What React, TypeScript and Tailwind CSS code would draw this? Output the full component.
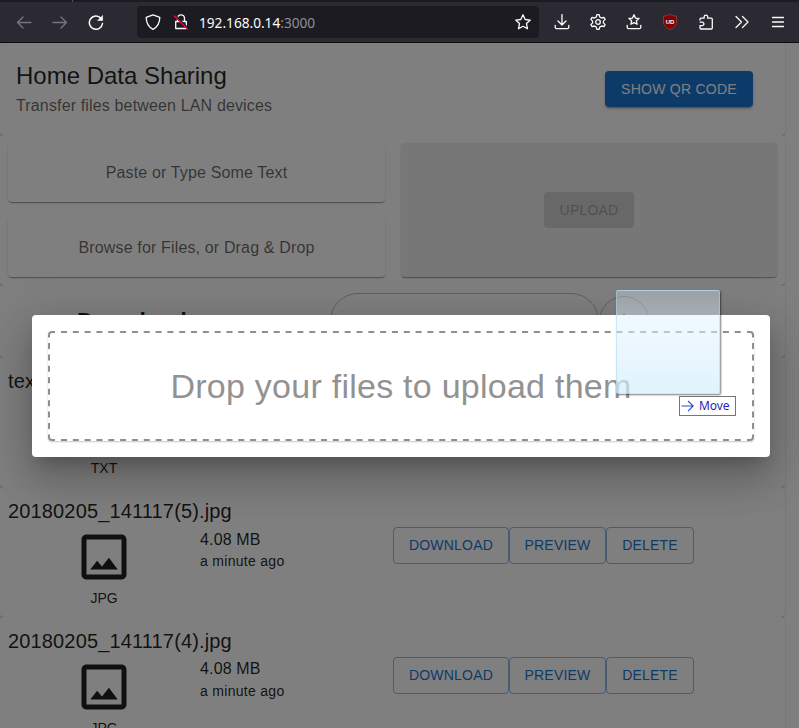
import React from "react";

const elevation1 =
  "shadow-[0_2px_1px_-1px_rgba(0,0,0,0.2),0_1px_1px_0_rgba(0,0,0,0.14),0_1px_3px_0_rgba(0,0,0,0.12)]";

function Glyph({ children, className = "" }: { children: React.ReactNode; className?: string }) {
  return (
    <svg
      viewBox="0 0 16 16"
      className={`size-4 shrink-0 ${className}`}
      fill="none"
      stroke="currentColor"
      strokeWidth="1.3"
      strokeLinecap="round"
      strokeLinejoin="round"
    >
      {children}
    </svg>
  );
}

function BrowserBar() {
  return (
    <header className="h-[43px] border-b border-[#0c0c0d] bg-[#2b2a33] text-[#fbfbfe]">
      <div className="flex h-0.5 bg-[#1c1b22]">
        <div className="ml-[72px] h-full w-px bg-[#53525b]" />
      </div>
      <div className="flex h-10 items-center">
        <div className="flex w-[137px] items-center gap-5 pl-4">
          <Glyph className="text-[#77767d]">
            <path d="M15 8.500H1.500M7 3 1.500 8.500 7 14" />
          </Glyph>
          <Glyph className="text-[#77767d]">
            <path d="M1 8.500h13.500M9 3l5.500 5.500L9 14" />
          </Glyph>
          <Glyph>
            <path strokeWidth="1.5" d="M13 4.400A6.600 6.600 0 1 0 14.500 9.500" />
            <path fill="currentColor" strokeWidth="0.6" d="M14.600 1.800v4.700H9.900z" />
          </Glyph>
        </div>
        <div className="flex h-8 w-[402px] items-center rounded bg-[#1c1b22] pr-2 pl-2">
          <Glyph>
            <path d="M8 .9 1.200 3.300c0 5.100 1.300 9.300 6.800 12 5.500-2.700 6.800-6.900 6.800-12z" />
          </Glyph>
          <Glyph className="ml-3">
            <path d="M4.500 7V4.300a3.500 3.500 0 0 1 7 0V7M2.700 7.500h10.600v7H2.700z" />
            <path stroke="#1c1b22" strokeWidth="2.200" d="M2.500 2l12.500 12.500" />
            <path stroke="#ff0039" strokeWidth="1.300" d="M1.500 2l13 13" />
          </Glyph>
          <span className="ml-2.5 pt-px font-['Noto_Sans',sans-serif] text-[13.700px] leading-5 tracking-[-0.02px] whitespace-nowrap">
            192.168.0.14<span className="text-[#8f8f96]">:3000</span>
          </span>
          <Glyph className="ml-auto">
            <path d="M8 .8l2.200 4.700 5.100.6-3.800 3.500 1 5.200L8 12.300l-4.500 2.500 1-5.200L.7 6.100l5.100-.6z" />
          </Glyph>
        </div>
        <div className="flex items-center gap-5 pl-[15px]">
          <Glyph>
            <path d="M8 .6v10M4 7l4 4 4-4M1.200 11.500v1.700q0 1.500 1.500 1.500h10.600q1.500 0 1.500-1.500v-1.700" />
          </Glyph>
          <Glyph>
            <circle cx="8" cy="8" r="2.300" />
            <path d="M6.200 3 6.900.6h2.200L9.800 3l1.700 1 2.400-.6 1.200 2-1.700 1.700v1.800l1.700 1.700-1.200 2-2.400-.6-1.700 1-.7 2.400H6.900L6.200 13l-1.700-1-2.400.6-1.200-2 1.700-1.700V7.100L.9 5.400l1.200-2 2.400.6z" />
          </Glyph>
          <Glyph>
            <path d="M8 .8l1.500 3.300 3.500.4-2.600 2.300.7 3.500L8 8.600l-3.100 1.700.7-3.500L3 4.500l3.500-.4zM1.200 11.300v1.900q0 1.500 1.500 1.500h10.600q1.500 0 1.500-1.500v-1.900" />
          </Glyph>
          <span className="relative flex size-4 items-center justify-center">
            <svg viewBox="0 0 16 16" className="absolute inset-0 size-4">
              <path fill="#800000" stroke="#96585d" strokeWidth=".6" d="M8 .3q3 1.900 6.500 1.900v6c0 3.500-3 5.800-6.500 7.500C4.500 14 1.500 11.700 1.500 8.200v-6Q5 2.200 8 .3z" />
            </svg>
            <span className="relative font-['Liberation_Sans',sans-serif] text-[6px] leading-none font-bold">UD</span>
          </span>
          <Glyph>
            <path d="M2 6V5.200q0-1 1-1h3.100V2.900a1.800 1.800 0 0 1 3.600 0v1.300h3.600q1 0 1 1v8.800q0 1-1 1H3q-1 0-1-1v-2.400h2.200a1.500 1.500 0 0 0 0-3.400H2.200" />
          </Glyph>
          <Glyph>
            <path d="M2 2.500 7.500 8 2 13.500M8.500 2.500 14 8l-5.500 5.500" />
          </Glyph>
          <Glyph>
            <path d="M2.500 3.500h11M2.500 8h11M2.500 12.500h11" />
          </Glyph>
        </div>
      </div>
    </header>
  );
}

function Section({ className, children }: { className: string; children: React.ReactNode }) {
  return <section className={`rounded bg-white ${elevation1} ${className}`}>{children}</section>;
}

function OutlinedButton({ children, className }: { children: string; className: string }) {
  return (
    <button
      className={`h-[37px] rounded border border-[#1976d2]/50 pb-0.5 text-sm tracking-[0.2px] text-[#1976d2] ${className}`}
    >
      {children}
    </button>
  );
}

function FileRow({ name, kind, size, sizeLine = "h-6 leading-6" }: { name: string; kind: string; size: string; sizeLine?: string }) {
  return (
    <Section className="h-[130px] shrink-0 p-2">
      <h2 className="text-xl leading-8 tracking-[0.15px]">{name}</h2>
      <div className="grid grid-cols-[192px_193px_1fr]">
        <div className="flex flex-col items-center">
          <svg viewBox="0 0 24 24" className="size-[60px]" fill="currentColor">
            <path d="M19 5v14H5V5h14m0-2H5c-1.100 0-2 .9-2 2v14c0 1.100.9 2 2 2h14c1.100 0 2-.9 2-2V5c0-1.100-.9-2-2-2zm-5.040 9.290-2.750 3.540-1.960-2.360L6.500 17h11l-3.540-4.710z" />
          </svg>
          <span className="text-sm leading-[22px]">{kind}</span>
        </div>
        <div>
          <p className={`text-base tracking-[0.15px] ${sizeLine}`}>{size}</p>
          <p className="text-sm leading-5 tracking-[0.3px]">a minute ago</p>
        </div>
        <div className="flex items-start">
          <OutlinedButton className="w-[116px]">DOWNLOAD</OutlinedButton>
          <OutlinedButton className="w-[97px]">PREVIEW</OutlinedButton>
          <OutlinedButton className="w-[88px]">DELETE</OutlinedButton>
        </div>
      </div>
    </Section>
  );
}

function DropDialog() {
  return (
    <div className="absolute inset-0 bg-black/50">
      <div className="mt-[272px] ml-8 h-[142px] w-[738px] rounded bg-white p-4 shadow-[0_11px_15px_-7px_rgba(0,0,0,0.2),0_24px_38px_3px_rgba(0,0,0,0.14),0_9px_46px_8px_rgba(0,0,0,0.12)]">
        <div className="relative flex h-full items-center justify-center rounded text-[34px] tracking-[0.25px] text-[#929292] shadow-[0_1px_2px_0_rgba(0,0,0,0.22)]">
          <svg viewBox="0 0 706 110" className="absolute inset-0 h-[110px] w-[706px]" fill="none" stroke="#8f8f8f" strokeWidth="2">
            <path strokeDasharray="6 5.820" d="M13 1h680M13 109h680" />
            <path strokeDasharray="6 5.430" d="M1 12v86M705 12v86" />
            <path d="M1 6.500V4a3 3 0 0 1 3-3h3M699 1h3a3 3 0 0 1 3 3v2.500M705 103.500v2.500a3 3 0 0 1-3 3h-3M7 109H4a3 3 0 0 1-3-3v-2.500" />
          </svg>
          Drop your files to upload them
        </div>
      </div>
    </div>
  );
}

function DragGhost() {
  return (
    <>
      <div className="absolute top-[290px] left-[616px] size-[104px] rounded-xs border border-[#a9d5ee]/50 bg-linear-to-b from-[#d8ecf6]/33 via-[#e0f3fe]/60 to-[#d3edfc]/70 shadow-[1px_1px_2px_rgba(0,0,0,0.5)]" />
      <div className="absolute top-[396px] left-[679px] flex h-5 w-[57px] items-center border border-[#767676] bg-white pl-px text-[#1f1fc0]">
        <svg viewBox="0 0 13 12" className="h-3 w-[13px]" fill="none" stroke="#2348c8" strokeWidth="1.1">
          <path d="M.5 6h12M7 .8 12.200 6 7 11.200" />
        </svg>
        <span className="ml-[5px] font-['Noto_Sans',sans-serif] text-xs leading-4 tracking-[-0.1px]">Move</span>
      </div>
    </>
  );
}

export default function App() {
  return (
    <div className="relative flex h-[728px] w-[799px] flex-col overflow-hidden font-['Liberation_Sans',Arial,sans-serif] text-black/87">
      <BrowserBar />
      <main className="relative flex-1 overflow-hidden bg-white">
        <div className="flex w-[785px] flex-col">
          <Section className="flex h-[92px] items-center justify-between pr-8 pl-4">
            <div className="pt-0.5">
              <h1 className="text-2xl leading-8">Home Data Sharing</h1>
              <p className="text-base leading-7 tracking-[0.15px] text-black/60">Transfer files between LAN devices</p>
            </div>
            <button className="h-9 w-[148px] rounded bg-[#1976d2] text-sm tracking-[0.25px] text-white shadow-[0_3px_1px_-2px_rgba(0,0,0,0.2),0_2px_2px_0_rgba(0,0,0,0.14),0_1px_5px_0_rgba(0,0,0,0.12)]">
              SHOW QR CODE
            </button>
          </Section>
          <Section className="grid h-[150px] grid-cols-[377px_376px] gap-4 p-2">
            <div className="grid grid-rows-2 gap-4 text-base tracking-[0.15px] text-black/60">
              <div className={`flex items-center justify-center rounded ${elevation1}`}>Paste or Type Some Text</div>
              <div className={`flex items-center justify-center rounded ${elevation1}`}>
                Browse for Files, or Drag &amp; Drop
              </div>
            </div>
            <div className={`flex items-center justify-center rounded bg-[#eeeeee] ${elevation1}`}>
              <button className="h-9 w-[90px] rounded bg-black/12 text-sm tracking-[0.2px] text-black/26">UPLOAD</button>
            </div>
          </Section>
          <Section className="flex h-[72px] items-center">
            <h2 className="w-[330px] pt-0.5 pl-[77px] text-[23px] leading-8 font-bold">Downloads</h2>
            <div className="h-14 w-[269px] rounded-full border border-black/25" />
            <button className="flex size-[50px] items-center justify-center rounded-full border border-black/25 text-[#1976d2]">
              <svg viewBox="0 0 24 24" className="size-6" fill="currentColor">
                <path d="M19 13h-6v6h-2v-6H5v-2h6V5h2v6h6z" />
              </svg>
            </button>
          </Section>
          <FileRow name="text.txt" kind="TXT" size="12 B" />
          <FileRow name="20180205_141117(5).jpg" kind="JPG" size="4.08 MB" sizeLine="h-6 leading-[26px]" />
          <FileRow name="20180205_141117(4).jpg" kind="JPG" size="4.08 MB" />
        </div>
        <DropDialog />
      </main>
      <DragGhost />
    </div>
  );
}
